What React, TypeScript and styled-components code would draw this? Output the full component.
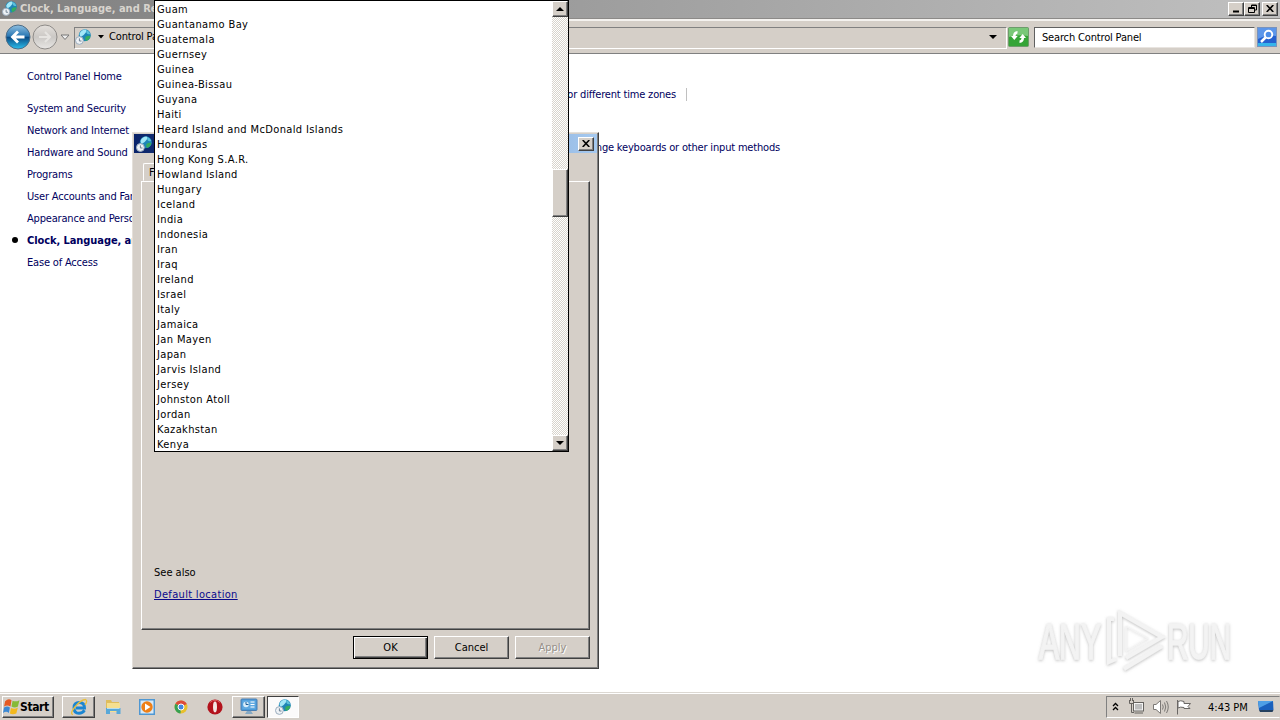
import React from "react";
import styled, { createGlobalStyle, css } from "styled-components";

const FACE = "#d5cfc8";

const Global = createGlobalStyle`
  * { box-sizing: border-box; }
  html, body { margin: 0; padding: 0; }
  body {
    width: 1280px; height: 720px; overflow: hidden; background: #fff; color: #000;
    font-family: "DejaVu Sans Condensed", "DejaVu Sans", sans-serif;
    font-stretch: condensed;
    font-size: 11px; line-height: 15px; white-space: nowrap;
  }
  svg { display: block; flex: none; }
`;

const raised = css`
  border: 1px solid;
  border-color: #fff #404040 #404040 #fff;
  box-shadow: inset -1px -1px 0 #808080;
`;

const Desktop = styled.div`
  position: relative; width: 1280px; height: 720px; overflow: hidden;
  display: flex; flex-direction: column;
`;
const TitleBar = styled.header`
  height: 19px; flex: none; display: flex; align-items: center; gap: 3px; padding: 0 2px 1px 2px;
  background: linear-gradient(90deg, #808080, #c0c0c0);
  color: #d8d4ce; font-weight: bold; border-bottom: 1px solid #8c8a88;
`;
const TitleText = styled.span`flex: 1;`;
const Controls = styled.div`display: flex;`;
const WinButton = styled.button<{ $ml?: number }>`
  ${raised}
  width: 16px; height: 14px; margin: 0 0 0 ${p => p.$ml ?? 0}px; padding: 0; background: ${FACE};
  display: flex; align-items: center; justify-content: center;
`;
const Toolbar = styled.div`
  height: 35px; flex: none; background: ${FACE}; border-top: 2px solid #f4f2ef;
  border-bottom: 1px solid #808080; display: flex; align-items: center; padding: 0 2px 0 5px;
  letter-spacing: -.16px;
`;
const Address = styled.div`
  height: 22px; width: 933px; margin-left: 4px; margin-top: 2px; border: 1px solid; border-color: #808080 #fff #fff #808080;
  display: flex; align-items: center; gap: 5px; padding: 0 9px 3px 0;
`;
const Caret = styled.span`margin-left: 2px;`;
const Spacer = styled.span`flex: 1;`;
const SearchBox = styled.div`
  width: 221px; height: 21px; margin: 1px 2px 0 5px; background: #fff; padding: 2px 7px;
  border: 1px solid; border-color: #606060 #e8e4e0 #e8e4e0 #606060;
`;
const Body = styled.main`flex: 1; display: flex; background: #fff; color: #00005e; letter-spacing: -.18px;`;
const Side = styled.nav`
  width: 400px; padding: 15px 0 0 27px; display: flex; flex-direction: column;
`;
const SideLink = styled.a<{ $first?: boolean; $on?: boolean }>`
  height: 22px; line-height: 15px; margin-bottom: ${p => (p.$first ? 10 : 0)}px;
  font-weight: ${p => (p.$on ? "bold" : "normal")};
  ${p => p.$on && css`
    letter-spacing: -.08px;
    &::before { content: ""; display: inline-block; width: 6px; height: 6px; border-radius: 50%;
      background: #000; margin: 0 9px 2px -15px; vertical-align: middle; }
  `}
`;
const Tasks = styled.section`
  width: 380px; padding-top: 33px; display: flex; flex-direction: column; align-items: flex-end;
`;
const TaskLine = styled.div<{ $inset?: number }>`
  height: 53px; display: flex; align-items: flex-start; gap: 10px; padding-right: ${p => p.$inset ?? 0}px;
`;
const Rule = styled.span`width: 1px; height: 13px; background: #c0c0c0; margin-top: 1px;`;

const Dialog = styled.section`
  ${raised}
  position: absolute; left: 132px; top: 132px; width: 467px; height: 537px; background: ${FACE};
  border-left-color: #e4e0da; border-top-color: #e4e0da;
  padding: 1px; display: flex; flex-direction: column;
`;
const DialogTitle = styled.header`
  height: 19px; flex: none; display: flex; align-items: center; gap: 3px; padding: 0 3px 0 2px; color: #fff; font-weight: bold;
  background: linear-gradient(90deg, #0a246a, #a6caf0);
`;
const TabStrip = styled.div`height: 28px; flex: none; display: flex; align-items: flex-end; padding-left: 9px;`;
const Tab = styled.div`
  height: 18px; width: 54px; border: 1px solid; border-color: #fff #404040 transparent #fff;
  border-radius: 2px 2px 0 0; padding: 1px 5px;
`;
const TabPage = styled.div`
  ${raised}
  height: 449px; margin: 0 7px; padding: 0 12px 27px; display: flex; flex-direction: column; justify-content: flex-end; gap: 7px;
`;
const Link = styled.a`color: #0a0a8c; text-decoration: underline; letter-spacing: .32px;`;
const Actions = styled.div`display: flex; justify-content: flex-end; gap: 6px; padding: 6px 7px 0;`;
const Button = styled.button<{ $default?: boolean }>`
  ${raised}
  font: inherit; width: 75px; height: 23px; padding: 0 0 1px; background: ${FACE}; color: #000;
  ${p => p.$default && css`
    border-color: #000; box-shadow: inset 1px 1px 0 #fff, inset -1px -1px 0 #404040, inset -2px -2px 0 #808080;
  `}
  &:disabled { color: #969089; text-shadow: 1px 1px 0 #fff; }
`;

const Popup = styled.div`
  position: absolute; left: 154px; top: 0; width: 415px; height: 452px; border: 1px solid #000;
  background: #fff; display: flex;
`;
const List = styled.ul`flex: 1; margin: 0; padding: 1px 0 0 2px; list-style: none; letter-spacing: .37px; overflow: hidden;`;
const Item = styled.li`height: 15px; line-height: 15px;`;
const ScrollBar = styled.div`
  width: 16px; display: flex; flex-direction: column;
  background: repeating-conic-gradient(#fff 0 25%, #d8d4cc 0 50%) 0 0 / 2px 2px;
`;
const ScrollButton = styled.div`
  ${raised}
  height: 16px; background: ${FACE}; display: flex; align-items: center; justify-content: center;
`;
const Thumb = styled.div`${raised} height: 48px; margin-top: 152px; background: ${FACE};`;

const Taskbar = styled.footer`
  height: 28px; flex: none; background: ${FACE}; display: flex; align-items: center; padding: 2px 0 2px 2px;
  border-top: 1px solid #dcd8d2; box-shadow: inset 0 1px 0 #fff;
`;
const Start = styled.button`
  ${raised}
  width: 52px; height: 22px; background: ${FACE}; display: flex; align-items: center; padding: 0;
  font: bold 12px "DejaVu Sans Condensed", "DejaVu Sans", sans-serif; font-stretch: condensed; letter-spacing: -.4px; margin-right: 8px;
`;
const TaskItem = styled.div<{ $state?: "open" | "active" }>`
  width: 34px; height: 22px; display: flex; align-items: center; justify-content: center;
  ${p => p.$state === "open" && css`${raised} width: 33px; margin-right: 1px;`}
  ${p => p.$state === "active" && css`width: 32px; background: #fbfafa; border: 1px solid; border-color: #404040 #fff #fff #404040; margin-left: 1px;`}
`;
const Tray = styled.div`
  width: 174px; height: 22px; border: 1px solid; border-color: #808080 transparent #fff #808080;
  display: flex; align-items: center; padding: 0 3px 0 5px;
`;
const Clock = styled.time`margin: 1px 10px 0 16px; letter-spacing: 0;`;
const TrayIcon = styled.span<{ $ml: number }>`margin-left: ${p => p.$ml}px;`;

const Watermark = styled.div`position: absolute; left: 1032px; top: 602px;`;

const Down = ({ up }: { up?: boolean }) => (
  <svg width="8" height="4" viewBox="0 0 8 4"><path d={up ? "M0 4L4 0L8 4Z" : "M0 0H8L4 4Z"} /></svg>
);
const Close = () => (
  <svg width="8" height="7" viewBox="0 0 8 7"><path d="M.7 0L7.3 7M7.3 0L.7 7" stroke="#000" strokeWidth="1.6" /></svg>
);
const GlobeClock = ({ s = 16 }: { s?: number }) => (
  <svg width={s} height={s} viewBox="0 0 16 16">
    <circle cx="9.800" cy="6.200" r="6" fill="#1e86b6" />
    <path d="M4.500 5Q6 .8 10.500 .6Q12.500 2 10 4.500Q9 6 6.500 7.500Q4.500 7.500 4.500 5Z" fill="#a4e8f8" />
    <path d="M11 .8Q14.500 2 15.300 5Q13 6 11.500 4Z" fill="#5cc0dc" />
    <path d="M10.500 8Q13 6 15.500 7Q14.500 11 11 12Q9.500 10 10.500 8Z" fill="#35ac5e" />
    <circle cx="4.400" cy="11.500" r="3.900" fill="#eef2f6" stroke="#9aabbc" />
    <path d="M4.400 9.300V12H6.500" stroke="#6f8193" fill="none" />
  </svg>
);
const NavArrow = ({ off }: { off?: boolean }) => (
  <svg width="26" height="26" viewBox="0 0 26 26">
    <defs>
      <linearGradient id="navBlue" x2="0" y2="1"><stop stopColor="#8fbfe0" /><stop offset=".46" stopColor="#2a78b4" /><stop offset=".52" stopColor="#0a4c86" /><stop offset="1" stopColor="#2cc0ee" /></linearGradient>
      <linearGradient id="navGrey" x2="0" y2="1"><stop stopColor="#e4e0dc" /><stop offset=".5" stopColor="#cbc8c5" /><stop offset="1" stopColor="#e9e7e5" /></linearGradient>
    </defs>
    <circle cx="13" cy="13" r="12" fill={off ? "url(#navGrey)" : "url(#navBlue)"} stroke={off ? "#8e8b88" : "#4d6c86"} />
    <path d={off ? "M7 13H18M13 8L18 13L13 18" : "M19.500 13H8M13 7.500L7.500 13L13 18.500"} fill="none" stroke={off ? "#e6e4e1" : "#fff"} strokeWidth={off ? 2 : 2.8} />
  </svg>
);
const Refresh = () => (
  <svg width="21" height="20" viewBox="0 0 21 20">
    <rect x=".5" y=".5" width="20" height="19" rx="1" fill="#35a437" stroke="#6d9c6c" />
    <path d="M1 1H20V9Q10 7 1 10Z" fill="#79c878" />
    <path d="M3 9H5Q5 4.500 9.500 4V6.500Q7.500 7 7.500 9H9.700L6.300 13Z" fill="#fff" />
    <path d="M18 11H16Q16 15.500 11.500 16V13.500Q13.500 13 13.500 11H11.300L14.700 7Z" fill="#fff" />
  </svg>
);
const SearchIcon = () => (
  <svg width="20" height="20" viewBox="0 0 20 20">
    <rect x=".5" y=".5" width="19" height="19" fill="#2460cf" stroke="#7993bd" />
    <path d="M1 1H19V9Q9 8 1 12Z" fill="#5c96ea" /><path d="M1 16H19V19H1Z" fill="#36b4ea" />
    <circle cx="11.500" cy="7.500" r="3.800" fill="#4d8de8" stroke="#fff" strokeWidth="1.900" />
    <path d="M8.500 10.500L4 15" stroke="#fff" strokeWidth="2.500" />
  </svg>
);
const Flag = () => (
  <svg width="17" height="17" viewBox="0 0 16 16">
    <path d="M2 3Q5 0 8 2L7 8Q4 6 1 8Z" fill="#e45a24" /><path d="M9 2.500Q12 4 15.500 2L14 8Q11 10 8 8Z" fill="#86ba38" />
    <path d="M1 9Q4 7 6.500 9L5.500 14Q3 12 0 14Z" fill="#3b88d4" /><path d="M7.500 9.500Q11 11 14 9L12.500 14.500Q9 16 6.500 14.500Z" fill="#f3b91e" />
  </svg>
);
const IE = () => (
  <svg width="18" height="18" viewBox="0 0 18 18">
    <path d="M14.500 12.200Q12.500 15.300 9 15.300Q4 15.300 4 9.700Q4 4.500 9.300 4.500Q14.500 4.500 14.500 10H6" fill="none" stroke="#1b86d2" strokeWidth="2.900" />
    <path d="M3 16.500Q-.5 16 4.500 9.500Q11 1.500 15.500 1.500Q18 2.500 15 7" fill="none" stroke="#e9bf3c" strokeWidth="1.300" />
  </svg>
);
const Folder = () => (
  <svg width="18" height="17" viewBox="0 0 18 17">
    <path d="M2 2H7L8 4H15V13H2Z" fill="#dfbd5c" /><path d="M3 5H16V14H3Z" fill="#f5df90" />
    <path d="M2 10H16.500V16H12.500V13H6V16H2Z" fill="#58a8d8" /><path d="M3 10.500H15.500" stroke="#b8def0" />
  </svg>
);
const Player = () => (
  <svg width="16" height="16" viewBox="0 0 16 16">
    <rect x=".75" y=".75" width="14.500" height="14.500" fill="#d8e9f7" stroke="#4f97d2" strokeWidth="1.500" />
    <circle cx="8" cy="8" r="5.700" fill="#ef7f16" /><path d="M6 4.500L11.500 8L6 11.500Z" fill="#fff" />
  </svg>
);
const Chrome = () => (
  <svg width="14" height="14" viewBox="0 0 14 14">
    <circle cx="7" cy="7" r="6.500" fill="#e8c02c" /><path d="M7 7L1.400 3.800A6.500 6.500 0 0 1 12.800 4Z" fill="#dd4b3a" />
    <path d="M7 7L1.400 3.800A6.500 6.500 0 0 0 6.500 13.500Z" fill="#37a052" />
    <circle cx="7" cy="7" r="3" fill="#4387df" stroke="#fff" />
  </svg>
);
const Opera = () => (
  <svg width="16" height="16" viewBox="0 0 16 16"><circle cx="8" cy="8" r="7.600" fill="#b3121c" /><path d="M3 3.500Q8 -1 13 3.500" stroke="#e05a5e" fill="none" /><ellipse cx="8" cy="8" rx="2" ry="5.400" fill="#f4e6e4" /></svg>
);
const Panel = () => (
  <svg width="18" height="17" viewBox="0 0 18 17">
    <rect x="1" y="1" width="16" height="11.500" rx="1" fill="#4a9bda" stroke="#4a7fb3" />
    <rect x="2.500" y="2.500" width="13" height="8.500" fill="#5fa9e0" />
    <circle cx="6" cy="6.500" r="2.800" fill="#d9eefb" /><path d="M6 4V6.500H8.500" stroke="#1b5c96" fill="none" />
    <path d="M10.500 4H14.500M10.500 6.500H14.500M10.500 9H14.500" stroke="#fff" /><path d="M7 13H11L13 16H5Z" fill="#86a9c4" />
  </svg>
);
const Network = () => (
  <svg width="17" height="17" viewBox="0 0 17 17" fill="none" stroke="#65625f">
    <path d="M1.500 2V5.500H5.500V2M2.500 0V3M4.500 0V3M3.500 5.500V14.500H6" />
    <rect x="5.500" y="4.500" width="10" height="8.500" fill="#f4f4f4" /><rect x="7" y="6" width="7" height="5.500" fill="#bdbdbd" stroke="none" /><path d="M6.500 15H15" />
  </svg>
);
const Speaker = () => (
  <svg width="17" height="16" viewBox="0 0 17 16" fill="none" stroke="#7b7875">
    <path d="M1.500 5.500H4L8.500 1.500V14.500L4 10.500H1.500Z" fill="#fff" /><path d="M10.500 5.500Q12 8 10.500 10.500M12.500 3.500Q15 8 12.500 12.500M14.500 2Q18 8 14.500 14" />
  </svg>
);
const FlagIcon = () => (
  <svg width="16" height="16" viewBox="0 0 16 16" fill="#fff" stroke="#6a6764"><path d="M1.500 1V15.500" /><path d="M2 2.500Q4.500 1 8 2.500V4.500H14.500L12 7.500L14 9.500H8V8.500Q4 7.500 2 9Z" /></svg>
);
const Monitor = () => (
  <svg width="16" height="14" viewBox="0 0 16 14"><path d="M0 1L15 1L15.500 10H1Z" fill="#1a60bd" /><path d="M0 1H15L1 8Z" fill="#4e9fe6" /><path d="M1 10H15.500L14.500 12H2Z" fill="#24405f" /></svg>
);
const Chevrons = () => (
  <svg width="7" height="9" viewBox="0 0 7 9"><path d="M1 4L3.500 1.500L6 4M1 8L3.500 5.500L6 8" stroke="#000" strokeWidth="1.300" fill="none" /></svg>
);

const countries = ["Guam", "Guantanamo Bay", "Guatemala", "Guernsey", "Guinea", "Guinea-Bissau", "Guyana", "Haiti",
  "Heard Island and McDonald Islands", "Honduras", "Hong Kong S.A.R.", "Howland Island", "Hungary", "Iceland", "India",
  "Indonesia", "Iran", "Iraq", "Ireland", "Israel", "Italy", "Jamaica", "Jan Mayen", "Japan", "Jarvis Island", "Jersey",
  "Johnston Atoll", "Jordan", "Kazakhstan", "Kenya"];
const categories = ["Control Panel Home", "System and Security", "Network and Internet", "Hardware and Sound", "Programs",
  "User Accounts and Family Safety", "Appearance and Personalization", "Clock, Language, and Region", "Ease of Access"];

export default function App() {
  return (
    <>
      <Global />
      <Desktop>
        <TitleBar>
          <GlobeClock s={15} />
          <TitleText>Clock, Language, and Region</TitleText>
          <Controls>
            <WinButton><svg width="8" height="8"><path d="M1 6.500H7" stroke="#000" strokeWidth="2" /></svg></WinButton>
            <WinButton><svg width="9" height="9" fill="none" stroke="#000"><path d="M3.500 3V1H8.500V6H6.500M3 1.500H9M.5 3.500H6.500V8.500H.5ZM0 4.500H7" /></svg></WinButton>
            <WinButton $ml={2}><Close /></WinButton>
          </Controls>
        </TitleBar>
        <Toolbar>
          <NavArrow /><TrayIcon $ml={1}><NavArrow off /></TrayIcon>
          <TrayIcon $ml={2}><svg width="10" height="7"><path d="M1 1H9L5 5.500Z" fill="#eee" stroke="#777" /></svg></TrayIcon>
          <Address>
            <GlobeClock /><Caret><svg width="6" height="4"><path d="M0 0H6L3 3.500Z" /></svg></Caret>
            <span>Control Panel</span><Spacer /><Down />
          </Address>
          <TrayIcon $ml={1}><Refresh /></TrayIcon>
          <SearchBox>Search Control Panel</SearchBox>
          <SearchIcon />
        </Toolbar>
        <Body>
          <Side>{categories.map((c, i) => <SideLink key={c} $first={i === 0} $on={i === 7}>{c}</SideLink>)}</Side>
          <Tasks>
            <TaskLine $inset={93}><span>Add clocks for different time zones</span><Rule /></TaskLine>
            <TaskLine>Change keyboards or other input methods</TaskLine>
          </Tasks>
        </Body>
        <Taskbar>
          <Start><Flag />Start</Start>
          <TaskItem $state="open"><IE /></TaskItem>
          <TaskItem><Folder /></TaskItem>
          <TaskItem><Player /></TaskItem>
          <TaskItem><Chrome /></TaskItem>
          <TaskItem><Opera /></TaskItem>
          <TaskItem $state="open"><Panel /></TaskItem>
          <TaskItem $state="active"><GlobeClock /></TaskItem>
          <Spacer />
          <Tray>
            <Chevrons />
            <TrayIcon $ml={9}><Network /></TrayIcon>
            <TrayIcon $ml={7}><Speaker /></TrayIcon>
            <TrayIcon $ml={7}><FlagIcon /></TrayIcon>
            <Clock>4:43 PM</Clock><Monitor />
          </Tray>
        </Taskbar>
        <Dialog>
          <DialogTitle>
            <GlobeClock /><TitleText>Region and Language</TitleText>
            <WinButton><Close /></WinButton>
          </DialogTitle>
          <TabStrip><Tab>Formats</Tab></TabStrip>
          <TabPage><span>See also</span><Link>Default location</Link></TabPage>
          <Actions><Button $default>OK</Button><Button>Cancel</Button><Button disabled>Apply</Button></Actions>
        </Dialog>
        <Popup>
          <List>{countries.map(c => <Item key={c}>{c}</Item>)}</List>
          <ScrollBar>
            <ScrollButton><Down up /></ScrollButton><Thumb /><Spacer /><ScrollButton><Down /></ScrollButton>
          </ScrollBar>
        </Popup>
        <Watermark>
          <svg width="220" height="74" viewBox="0 0 220 74">
            <defs><filter id="soft" x="-10%" y="-10%" width="120%" height="120%"><feDropShadow dx="0" dy="1" stdDeviation="1.500" floodColor="#888" floodOpacity=".55" /></filter></defs>
            <g filter="url(#soft)" fill="#f3f3f3" stroke="#f3f3f3" strokeWidth="1.400" fontFamily="Liberation Sans Narrow, Liberation Sans, sans-serif" fontSize="50">
              <text x="7" y="57" textLength="62" lengthAdjust="spacingAndGlyphs">ANY</text>
              <text x="135" y="57" textLength="64" lengthAdjust="spacingAndGlyphs">RUN</text>
              <g fill="none" strokeWidth="4"><path d="M88 54V11L130 35L94 56" /><path d="M82 17H77V60L84 57M92 67L130 44" /><path d="M94 24V49L116 36Z" strokeWidth="1" /></g>
            </g>
          </svg>
        </Watermark>
      </Desktop>
    </>
  );
}
